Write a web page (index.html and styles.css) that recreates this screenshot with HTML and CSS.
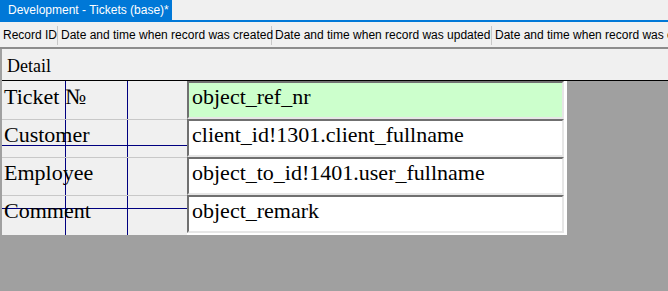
FILE: index.html
```html
<!DOCTYPE html>
<html lang="en">
  <head>
    <meta charset="UTF-8" />
    <title>Development - Tickets (base)*</title>
    <link rel="stylesheet" href="styles.css">
  </head>
  <body>
    <div class="tab-bar">
      <div class="tab">Development - Tickets (base)*</div>
    </div>

    <div class="column-bar">
      <span class="col col-id">Record ID</span>
      <span class="col col-created">Date and time when record was created</span>
      <span class="col col-updated">Date and time when record was updated</span>
      <span class="col col-rest">Date and time when record was created</span>
    </div>

    <div class="workspace">
      <div class="section-title">Detail</div>
      <div class="form">
        <div class="labels">
          <div class="label-row">Ticket №</div>
          <div class="label-row">Customer</div>
          <div class="label-row">Employee</div>
          <div class="label-row">Comment</div>
        </div>
        <div class="fields">
          <div class="field field-key">object_ref_nr</div>
          <div class="field">client_id!1301.client_fullname</div>
          <div class="field">object_to_id!1401.user_fullname</div>
          <div class="field">object_remark</div>
        </div>
      </div>
    </div>
  </body>
</html>
```

FILE: styles.css
```css
body {
  margin: 0;
  width: 668px;
  height: 291px;
  overflow: hidden;
  background-color: #a0a0a0;
  font-family: "Liberation Sans", Arial, sans-serif;
}

.tab-bar {
  height: 20px;
  background-color: #f0f0f0;
  border-bottom: 2px solid #0078d7;
}

.tab {
  display: inline-block;
  width: 164px;
  height: 20px;
  padding-left: 8px;
  background-color: #0078d7;
  color: #fff;
  font-size: 12px;
  line-height: 21px;
  white-space: nowrap;
}

.column-bar {
  display: flex;
  height: 25px;
  background-color: #f0f0f0;
  border-bottom: 2px solid #8c8c8c;
  font-size: 12px;
  white-space: nowrap;
  overflow: hidden;
}

.col {
  flex-shrink: 0;
  box-sizing: border-box;
  padding: 0 3px;
  margin-top: 4px;
  height: 19px;
  line-height: 18px;
  border-right: 1px solid #c8c8c8;
  color: #000;
}

.col-id { width: 58px; }
.col-created { width: 214px; }
.col-updated { width: 220px; }
.col-rest {
  flex-shrink: 1;
  min-width: 0;
  overflow: hidden;
  border-right: none;
}

.workspace {
  padding-left: 2px;
}

.section-title {
  height: 31px;
  background-color: #f0f0f0;
  border-bottom: 1px solid #000;
  padding-left: 5px;
  font-family: "Liberation Serif", "Times New Roman", serif;
  font-size: 18px;
  line-height: 34px;
}

.form {
  display: flex;
  width: 565px;
}

.labels {
  width: 185px;
  display: grid;
  grid-template-rows: repeat(4, 38px);
  font-family: "Liberation Serif", "Times New Roman", serif;
  font-size: 22px;
  line-height: 26px;
  background:
    linear-gradient(#000080, #000080) 63px 0 / 1px 100% no-repeat,
    linear-gradient(#000080, #000080) 125px 0 / 1px 100% no-repeat,
    linear-gradient(#000080, #000080) 0 64px / 100% 1px no-repeat,
    linear-gradient(#000080, #000080) 0 127px / 100% 1px no-repeat,
    #f0f0f0;
}

.label-row {
  padding: 3px 0 0 2px;
  white-space: nowrap;
}

.label-row + .label-row {
  border-top: 1px solid #c8c8c8;
  padding-top: 2px;
}

.fields {
  width: 380px;
  background-color: #fff;
  padding-bottom: 2px;
}

.field {
  box-sizing: border-box;
  width: 377px;
  height: 38px;
  padding: 1px 0 0 3px;
  border-style: solid;
  border-width: 2px;
  border-color: #707070 #e6e6e6 #e6e6e6 #707070;
  background-color: #fff;
  font-family: "Liberation Serif", "Times New Roman", serif;
  font-size: 22px;
  line-height: 26px;
  white-space: nowrap;
}

.field-key {
  background-color: #ccffcc;
}
```
